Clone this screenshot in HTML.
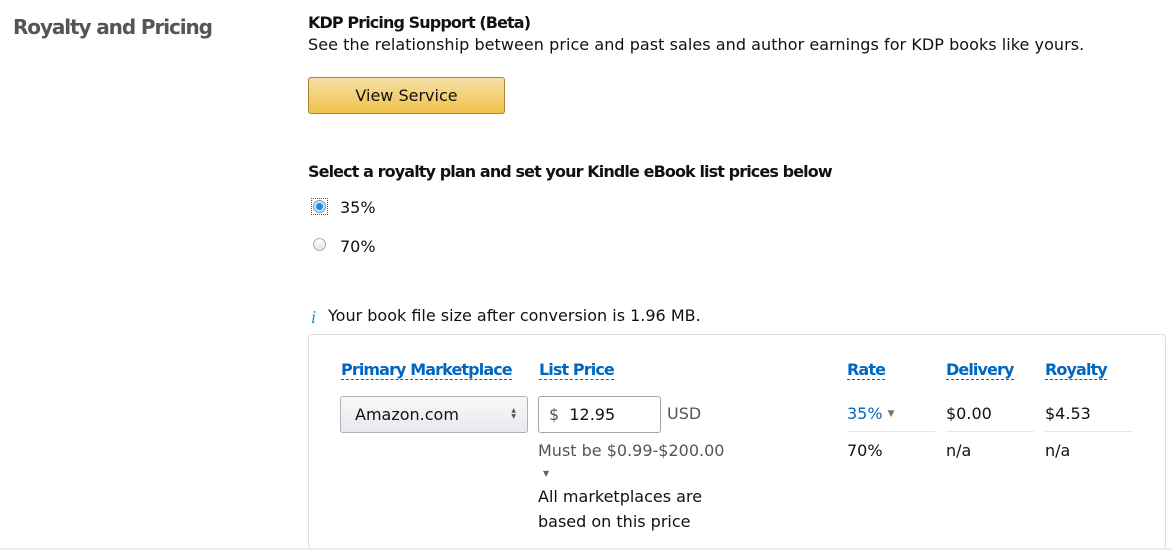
<!DOCTYPE html>
<html><head><style>
*{margin:0;padding:0;box-sizing:border-box}
body{width:1172px;height:550px;overflow:hidden;background:#fff;font-family:"DejaVu Sans","Liberation Sans",sans-serif;color:#111;font-size:16px;position:relative}
.a{position:absolute;white-space:nowrap;line-height:20px}
.b{font-weight:bold;letter-spacing:-0.9px}
.h{color:#0066c0;font-weight:bold;letter-spacing:-0.9px;border-bottom:1px dashed #0066c0;line-height:18px}
</style></head><body>
<div class="a b" style="left:13px;top:15px;font-size:20px;color:#555;line-height:24px;letter-spacing:-1.1px">Royalty and Pricing</div>
<div class="a b" style="left:308px;top:13px">KDP Pricing Support (Beta)</div>
<div class="a" style="left:308px;top:35px;letter-spacing:0.05px">See the relationship between price and past sales and author earnings for KDP books like yours.</div>
<div class="a" style="left:308px;top:77px;width:197px;height:37px;border:1px solid #a88734;border-radius:3px;background:linear-gradient(#f7e0a6,#f0c14b);text-align:center;line-height:35px">View Service</div>
<div class="a b" style="left:308px;top:162px">Select a royalty plan and set your Kindle eBook list prices below</div>
<div class="a" style="left:311px;top:198px;width:17px;height:17px;border:1px dotted #555"></div>
<div class="a" style="left:313px;top:200px;width:13px;height:13px;border-radius:50%;background:#cfe6fa;border:1px solid #5aa0e0"></div>
<div class="a" style="left:316px;top:203px;width:7px;height:7px;border-radius:50%;background:#1a8fe8"></div>
<div class="a" style="left:340px;top:198px">35%</div>
<div class="a" style="left:313px;top:238px;width:13px;height:13px;border-radius:50%;background:linear-gradient(#fff,#e4e4e4);border:1px solid #aaa"></div>
<div class="a" style="left:340px;top:237px">70%</div>
<div class="a" style="left:311px;top:307px;color:#2b8ec6;font-style:italic;font-family:'Liberation Serif',serif;font-size:18px">i</div>
<div class="a" style="left:328px;top:306px">Your book file size after conversion is 1.96 MB.</div>
<div class="a" style="left:308px;top:334px;width:858px;height:215px;border:1px solid #ddd;border-radius:4px"></div>
<div class="a" style="left:0;top:548px;width:1172px;height:2px;background:#eee"></div>
<div class="a h" style="left:341px;top:361px">Primary Marketplace</div>
<div class="a h" style="left:539px;top:361px">List Price</div>
<div class="a h" style="left:847px;top:361px">Rate</div>
<div class="a h" style="left:946px;top:361px">Delivery</div>
<div class="a h" style="left:1045px;top:361px">Royalty</div>
<div class="a" style="left:340px;top:396px;width:188px;height:37px;border:1px solid #adb1b8;border-radius:3px;background:linear-gradient(#f7f8fa,#e7e9ec);padding-left:14px;line-height:35px">Amazon.com
<span style="position:absolute;right:11px;top:11px;font-size:6px;color:#555;line-height:6px">&#9650;<br>&#9660;</span></div>
<div class="a" style="left:538px;top:396px;width:123px;height:37px;border:1px solid #a6a6a6;border-radius:3px;padding-left:10px;line-height:35px"><span style="color:#555">$</span>&nbsp; 12.95</div>
<div class="a" style="left:667px;top:404px;color:#555">USD</div>
<div class="a" style="left:847px;top:404px;color:#0066c0">35% <span style="font-size:9px;color:#777;vertical-align:3px">&#9660;</span></div>
<div class="a" style="left:946px;top:404px">$0.00</div>
<div class="a" style="left:1045px;top:404px">$4.53</div>
<div class="a" style="left:847px;top:431px;width:88px;height:1px;background:#e7e7e7"></div>
<div class="a" style="left:946px;top:431px;width:88px;height:1px;background:#e7e7e7"></div>
<div class="a" style="left:1045px;top:431px;width:88px;height:1px;background:#e7e7e7"></div>
<div class="a" style="left:847px;top:441px">70%</div>
<div class="a" style="left:946px;top:441px">n/a</div>
<div class="a" style="left:1045px;top:441px">n/a</div>
<div class="a" style="left:538px;top:441px;color:#555">Must be $0.99-$200.00</div>
<div class="a" style="left:543px;top:464px;font-size:8px;color:#666">&#9660;</div>
<div class="a" style="left:538px;top:487px">All marketplaces are</div>
<div class="a" style="left:538px;top:512px">based on this price</div>
</body></html>
